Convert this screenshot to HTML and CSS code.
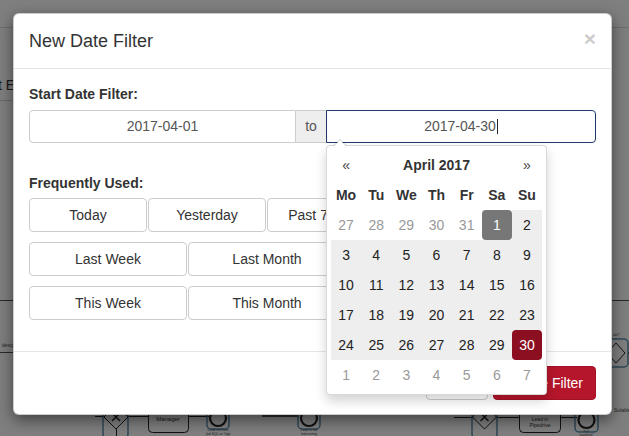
FILE: index.html
```html
<!DOCTYPE html>
<html>
<head>
<meta charset="utf-8">
<title>New Date Filter</title>
<link rel="stylesheet" href="styles.css">
</head>
<body>
<svg class="bg" width="629" height="436" viewBox="0 0 629 436">
  <line x1="0" y1="27.5" x2="629" y2="27.5" stroke="#dcdcdc"/>
  <text x="-9" y="90" font-size="14" fill="#333" font-family="Liberation Sans">st E</text>
  <line x1="0" y1="100.5" x2="13" y2="100.5" stroke="#d0d0d0"/>
  <line x1="0" y1="300.5" x2="629" y2="300.5" stroke="#555"/>
  <text x="2" y="347" font-size="5" fill="#444" font-family="Liberation Sans">desig</text>
  <line x1="0" y1="352.5" x2="13" y2="352.5" stroke="#555"/>
  <!-- right side event gateway -->
  <text x="613" y="336" font-size="4" fill="#444" font-family="Liberation Sans">ok?</text>
  <rect x="604" y="339" width="24" height="28" rx="4" fill="none" stroke="#5d8fb0" stroke-width="1.5"/>
  <path d="M607 353 L616 343 L625 353 L616 363 Z" fill="none" stroke="#222"/>
  <line x1="628" y1="353" x2="629" y2="353" stroke="#222"/>
  <text x="614" y="412" font-size="4.5" fill="#444" font-family="Liberation Sans">Suitable</text>
  <!-- bottom-left flow -->
  <line x1="95" y1="416.5" x2="148" y2="416.5" stroke="#222"/>
  <rect x="103" y="412" width="25" height="26" rx="4" fill="none" stroke="#5d8fb0" stroke-width="1.5"/>
  <path d="M116 405 L128 417 L116 429 L104 417 Z" fill="#fff" stroke="#222"/>
  <path d="M112 413 L120 421 M120 413 L112 421" stroke="#222" stroke-width="1.5"/>
  <line x1="116.5" y1="429" x2="116.5" y2="436" stroke="#222"/>
  <rect x="148.5" y="396.5" width="40" height="36" rx="4" fill="#fff" stroke="#222"/>
  <text x="168" y="421" font-size="6" fill="#333" text-anchor="middle" font-family="Liberation Sans">Manager</text>
  <line x1="188" y1="416.5" x2="209" y2="416.5" stroke="#222"/>
  <rect x="207" y="408" width="22" height="21" rx="4" fill="none" stroke="#5d8fb0" stroke-width="1.5"/>
  <circle cx="218" cy="418" r="8" fill="#fff" stroke="#222" stroke-width="2.2"/>
  <text x="218" y="431" font-size="3.5" fill="#444" text-anchor="middle" font-family="Liberation Sans">Lead not new</text>
  <text x="218" y="435" font-size="3.5" fill="#444" text-anchor="middle" font-family="Liberation Sans">(ad SQL or Opp</text>
  <line x1="262" y1="416" x2="299" y2="416" stroke="#222" stroke-width="1.5"/>
  <rect x="298" y="408" width="22" height="21" rx="4" fill="none" stroke="#5d8fb0" stroke-width="1.5"/>
  <circle cx="309" cy="418" r="8" fill="#fff" stroke="#222" stroke-width="2.2"/>
  <text x="309" y="431" font-size="3.5" fill="#444" text-anchor="middle" font-family="Liberation Sans">Lead is not</text>
  <text x="309" y="435" font-size="3.5" fill="#444" text-anchor="middle" font-family="Liberation Sans">interesting</text>
  <!-- bottom-right flow -->
  <line x1="454" y1="417.5" x2="519" y2="417.5" stroke="#222"/>
  <rect x="472" y="412" width="25" height="26" rx="4" fill="none" stroke="#5d8fb0" stroke-width="1.5"/>
  <path d="M484.5 405 L496.5 417 L484.5 429 L472.5 417 Z" fill="#fff" stroke="#222"/>
  <path d="M480.5 413 L488.5 421 M488.5 413 L480.5 421" stroke="#222" stroke-width="1.5"/>
  <rect x="519.5" y="398.5" width="41" height="34" rx="4" fill="#fff" stroke="#222"/>
  <text x="540" y="421" font-size="5" fill="#333" text-anchor="middle" font-family="Liberation Sans">Lead in</text>
  <text x="540" y="427" font-size="5" fill="#333" text-anchor="middle" font-family="Liberation Sans">Pipedrive</text>
  <line x1="560" y1="417.5" x2="577" y2="417.5" stroke="#222"/>
  <rect x="575" y="410" width="23" height="22" rx="4" fill="none" stroke="#5d8fb0" stroke-width="1.5"/>
  <circle cx="586.5" cy="420" r="8" fill="#fff" stroke="#222" stroke-width="2.2"/>
  <text x="586" y="432" font-size="3.5" fill="#444" text-anchor="middle" font-family="Liberation Sans">is it</text>
  <text x="586" y="435.5" font-size="3.5" fill="#444" text-anchor="middle" font-family="Liberation Sans">qualified</text>
</svg>
<div class="backdrop"></div>

<div class="modal">
  <div class="modal-header">
    <h4 class="modal-title">New Date Filter</h4>
    <span class="close">×</span>
  </div>
  <div class="modal-body">
    <div class="field-label">Start Date Filter:</div>
    <div class="input-group">
      <div class="input first">2017-04-01</div>
      <div class="addon">to</div>
      <div class="input last">2017-04-30<span class="cursor"></span></div>

      <div class="datepicker">
        <div class="cell nav">«</div>
        <div class="cell title">April 2017</div>
        <div class="cell nav">»</div>

        <div class="cell dow">Mo</div><div class="cell dow">Tu</div><div class="cell dow">We</div><div class="cell dow">Th</div><div class="cell dow">Fr</div><div class="cell dow">Sa</div><div class="cell dow">Su</div>

        <div class="cell day old">27</div><div class="cell day old">28</div><div class="cell day old">29</div><div class="cell day old">30</div><div class="cell day old">31</div><div class="cell day range start">1</div><div class="cell day range">2</div>

        <div class="cell day range">3</div><div class="cell day range">4</div><div class="cell day range">5</div><div class="cell day range">6</div><div class="cell day range">7</div><div class="cell day range">8</div><div class="cell day range">9</div>

        <div class="cell day range">10</div><div class="cell day range">11</div><div class="cell day range">12</div><div class="cell day range">13</div><div class="cell day range">14</div><div class="cell day range">15</div><div class="cell day range">16</div>

        <div class="cell day range">17</div><div class="cell day range">18</div><div class="cell day range">19</div><div class="cell day range">20</div><div class="cell day range">21</div><div class="cell day range">22</div><div class="cell day range">23</div>

        <div class="cell day range">24</div><div class="cell day range">25</div><div class="cell day range">26</div><div class="cell day range">27</div><div class="cell day range">28</div><div class="cell day range">29</div><div class="cell day range end">30</div>

        <div class="cell day new">1</div><div class="cell day new">2</div><div class="cell day new">3</div><div class="cell day new">4</div><div class="cell day new">5</div><div class="cell day new">6</div><div class="cell day new">7</div>
      </div>
    </div>

    <div class="field-label freq">Frequently Used:</div>
    <div class="btn-row r1">
      <button class="btn">Today</button>
      <button class="btn">Yesterday</button>
      <button class="btn">Past 7 Days</button>
      <button class="btn">Past 30 Days</button>
    </div>
    <div class="btn-row r2">
      <button class="btn">Last Week</button>
      <button class="btn">Last Month</button>
      <button class="btn">Last Year</button>
    </div>
    <div class="btn-row r2 last-row">
      <button class="btn">This Week</button>
      <button class="btn">This Month</button>
      <button class="btn">This Year</button>
    </div>
  </div>
  <div class="modal-footer">
    <button class="btn">Close</button>
    <button class="btn btn-red">Create Filter</button>
  </div>
</div>
</body>
</html>
```

FILE: styles.css
```css
* {
  box-sizing: border-box;
}

html, body {
  margin: 0;
  padding: 0;
}

body {
  position: relative;
  width: 629px;
  height: 436px;
  overflow: hidden;
  background: #fff;
  font-family: "Liberation Sans", Arial, sans-serif;
  font-size: 14px;
  color: #333;
}

.bg {
  position: absolute;
  left: 0;
  top: 0;
}

.backdrop {
  position: absolute;
  left: 0;
  top: 0;
  right: 0;
  bottom: 0;
  background: rgba(0, 0, 0, 0.5);
}

.modal {
  position: absolute;
  left: 13px;
  top: 13px;
  width: 599px;
  background: #fff;
  border: 1px solid rgba(0, 0, 0, 0.2);
  border-radius: 6px;
  box-shadow: 0 5px 15px rgba(0, 0, 0, 0.5);
}

.modal-header {
  display: flex;
  justify-content: space-between;
  align-items: flex-start;
  padding: 15px;
  border-bottom: 1px solid #e5e5e5;
}

.modal-title {
  margin: 0;
  font-size: 18px;
  font-weight: normal;
  line-height: 24px;
  color: #333;
}

.close {
  font-size: 21px;
  font-weight: bold;
  line-height: 21px;
  color: #000;
  opacity: 0.2;
  margin-top: -1px;
}

.modal-body {
  padding: 15px 15px 31px;
}

.field-label {
  font-weight: bold;
  line-height: 20px;
  margin-bottom: 6px;
  color: #333;
}

.field-label.freq {
  margin-top: 30px;
  margin-bottom: 5px;
}

.input-group {
  position: relative;
  display: flex;
  height: 33px;
}

.input {
  height: 33px;
  border: 1px solid #ccc;
  color: #555;
  text-align: center;
  line-height: 31px;
  background: #fff;
}

.input.first {
  width: 267px;
  border-radius: 4px 0 0 4px;
}

.addon {
  width: 30px;
  height: 33px;
  background: #eee;
  border-top: 1px solid #ccc;
  border-bottom: 1px solid #ccc;
  color: #555;
  text-align: center;
  line-height: 31px;
}

.input.last {
  width: 270px;
  border-color: #1f3a6a;
  border-radius: 0 4px 4px 0;
}

.cursor {
  display: inline-block;
  width: 1px;
  height: 15px;
  margin-left: 1px;
  background: #222;
  vertical-align: -3px;
}

/* datepicker dropdown */
.datepicker {
  position: absolute;
  left: 297px;
  top: 35px;
  width: 221px;
  padding: 4px;
  background: #fff;
  border: 1px solid rgba(0, 0, 0, 0.15);
  border-radius: 4px;
  box-shadow: 0 6px 12px rgba(0, 0, 0, 0.175);
  display: grid;
  grid-template-columns: repeat(7, 1fr);
  z-index: 10;
}

.datepicker::before {
  content: "";
  position: absolute;
  top: -7px;
  left: 6px;
  border-left: 7px solid transparent;
  border-right: 7px solid transparent;
  border-bottom: 7px solid rgba(0, 0, 0, 0.2);
}

.datepicker::after {
  content: "";
  position: absolute;
  top: -6px;
  left: 7px;
  border-left: 6px solid transparent;
  border-right: 6px solid transparent;
  border-bottom: 6px solid #fff;
}

.cell {
  height: 30px;
  line-height: 30px;
  text-align: center;
  color: #333;
}

.cell.nav {
  color: #444;
}

.cell.title {
  grid-column: span 5;
  font-weight: bold;
}

.cell.dow {
  font-weight: bold;
}

.day.old,
.day.new {
  color: #999;
}

.day.range {
  background: #eee;
  color: #222;
}

.day.start {
  background: #777;
  color: #fff;
  border-radius: 4px;
}

.day.end {
  background: #8b0f20;
  color: #fff;
  border-radius: 4px;
}

/* buttons */
.btn-row {
  display: flex;
  gap: 1px;
  margin-bottom: 10px;
}

.btn-row.last-row {
  margin-bottom: 0;
}

.btn {
  flex: none;
  height: 34px;
  padding: 6px 12px;
  border: 1px solid #ccc;
  border-radius: 4px;
  background: #fff;
  color: #333;
  font-family: "Liberation Sans", Arial, sans-serif;
  font-size: 14px;
  line-height: 20px;
  text-align: center;
  white-space: nowrap;
}

.r1 .btn {
  width: 118px;
}

.r2 .btn {
  width: 158px;
}

.modal-footer {
  display: flex;
  justify-content: flex-end;
  gap: 5px;
  padding: 14px 15px;
  border-top: 1px solid #e5e5e5;
}

.btn-red {
  background: #b5162b;
  border-color: #a21327;
  color: #fff;
}
```
